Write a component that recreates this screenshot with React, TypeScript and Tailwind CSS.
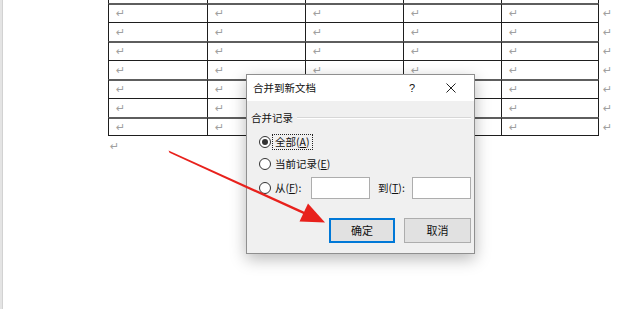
import React from "react";

const FONT = { fontFamily: '"Microsoft YaHei", "Noto Sans CJK SC", "Noto Sans", sans-serif' };

function Mark() {
  return <span className="block text-[11px] leading-[10px] text-[#a0a0a0]" style={{ fontFamily: '"DejaVu Sans", sans-serif' }}>↵</span>;
}

const widths = ["w-[99px]", "w-[98px]", "w-[98px]", "w-[98px]", "w-[98px]"];

function Row({ idx }: { idx: number }) {
  const thick = idx % 2 === 0;
  const last = idx === 6;
  return (
    <div className="flex">
      {widths.map((w, i) => {
        const hidden = idx >= 4 && (i === 2 || i === 3);
        return (
          <div
            key={i}
            className={`${w} h-[19px] border-l border-l-[#1e1e1e] ${i === 4 ? "border-r border-r-[#1e1e1e]" : ""} ${thick ? "border-t-2 border-t-[#5e5e5e] pt-[4px]" : "border-t border-t-[#1e1e1e] pt-[5px]"} ${last ? "border-b border-b-[#1e1e1e]" : ""} pl-[7px]`}
          >
            {!hidden && <Mark />}
          </div>
        );
      })}
      <div className="pl-[4px] pt-[6px]">
        <Mark />
      </div>
    </div>
  );
}

function Radio({ checked }: { checked?: boolean }) {
  return (
    <span className="w-[12px] h-[12px] rounded-full border border-[#333] bg-white flex items-center justify-center shrink-0">
      {checked && <span className="w-[6px] h-[6px] rounded-full bg-[#333]" />}
    </span>
  );
}

export default function App() {
  return (
    <div className="relative w-[620px] h-[309px] bg-white overflow-hidden flex" style={FONT}>
      <div className="w-[3px] h-full bg-[#e4e4e4] border-r border-[#d2d2d2]" />
      <div className="pl-[105px] flex flex-col">
        <div className="flex h-[3px]">
          {widths.map((w, i) => (
            <div key={i} className={`${w} h-[3px] border-l border-l-[#1e1e1e] ${i === 4 ? "border-r border-r-[#1e1e1e]" : ""}`} />
          ))}
        </div>
        {[0, 1, 2, 3, 4, 5, 6].map((i) => (
          <Row key={i} idx={i} />
        ))}
        <div className="pl-[2px] pt-[6px]">
          <Mark />
        </div>
      </div>

      {/* Dialog */}
      <div className="absolute left-[246px] top-[74px] w-[229px] h-[180px] border border-[#8f8f8f] bg-[#f0f0f0] flex flex-col shadow-[0_5px_15px_rgba(0,0,0,0.28)] text-[#111]">
        <div className="h-[26px] bg-white flex items-center shrink-0">
          <span className="ml-[6px] text-[10.5px] leading-none">合并到新文档</span>
          <span className="ml-auto mr-[31px] text-[11px] leading-none" style={{ fontFamily: '"Liberation Sans", sans-serif' }}>?</span>
          <svg width="10" height="10" viewBox="0 0 10 10" className="mr-[18px]">
            <path d="M0.5 0.5 L9.5 9.5 M9.5 0.5 L0.5 9.5" stroke="#222" strokeWidth="1" />
          </svg>
        </div>
        <div className="flex-1 flex flex-col pl-[4px] pr-[3px]">
          <div className="mt-[10px] h-[14px] flex items-center">
            <span className="text-[10.5px] leading-none">合并记录</span>
            <span className="flex-1 ml-[4px] h-[2px] border-t border-[#d7d7d7] border-b border-b-white" />
          </div>
          <div className="mt-[9px] h-[16px] flex items-center pl-[8px]">
            <Radio checked />
            <span className="ml-[1px] px-[2px] h-[16px] flex items-center border border-dotted border-[#222] text-[10.5px] leading-none">
              全部(<u>A</u>)
            </span>
          </div>
          <div className="mt-[6px] h-[16px] flex items-center pl-[8px]">
            <Radio />
            <span className="ml-[4px] text-[10.5px] leading-none">
              当前记录(<u>E</u>)
            </span>
          </div>
          <div className="mt-[5px] h-[22px] flex items-center pl-[8px]">
            <Radio />
            <span className="ml-[4px] text-[10.5px] leading-none w-[36px]">
              从(<u>F</u>):
            </span>
            <span className="w-[59px] h-[22px] bg-white border border-[#adadad]" />
            <span className="ml-[8px] text-[10.5px] leading-none w-[34px]">
              到(<u>T</u>):
            </span>
            <span className="w-[59px] h-[22px] bg-white border border-[#adadad]" />
          </div>
          <div className="mt-[19px] h-[25px] flex justify-end gap-[9px]">
            <button className="w-[66px] h-[25px] border-2 border-[#0078d7] bg-[#e1e1e1] text-[11px] leading-none">确定</button>
            <button className="w-[67px] h-[25px] border border-[#adadad] bg-[#e1e1e1] text-[11px] leading-none">取消</button>
          </div>
        </div>
      </div>

      {/* Red arrow */}
      <svg className="absolute left-0 top-0 pointer-events-none" width="620" height="309" viewBox="0 0 620 309">
        <polygon points="168.5,150.5 169.5,152.8 305,214.8 303.8,211.5" fill="#e8211c" />
        <polygon points="325,222.5 299.5,221.5 308,203.5" fill="#e8211c" />
      </svg>
    </div>
  );
}
